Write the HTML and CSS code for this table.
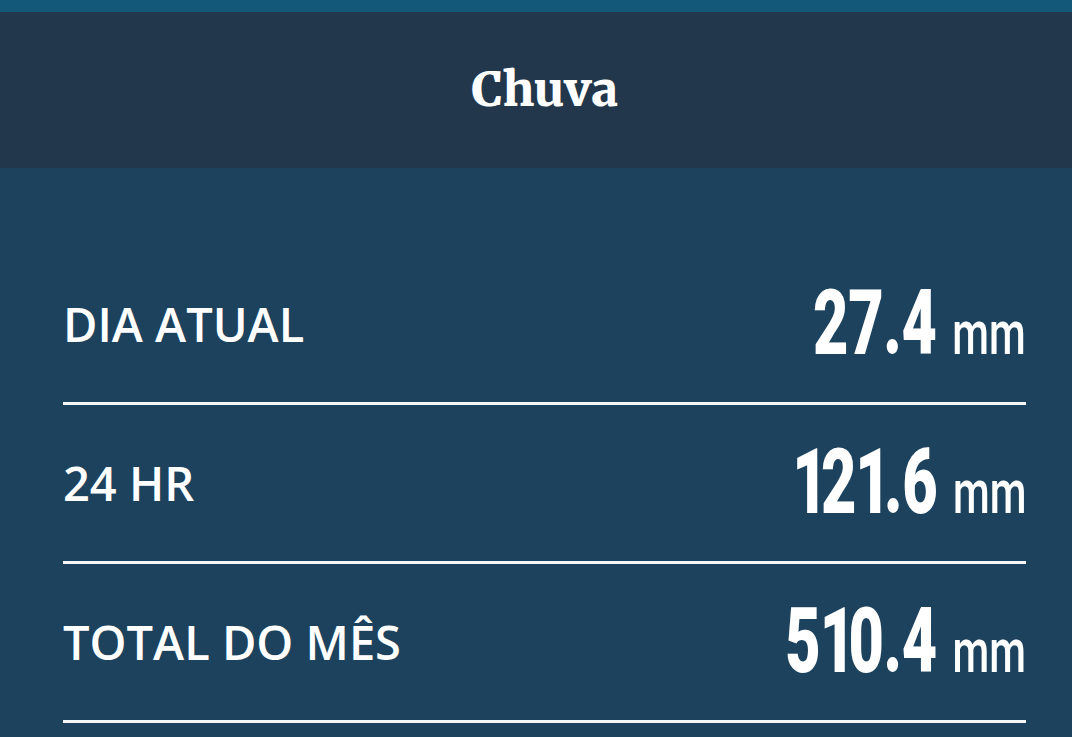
FILE: index.html
```html
<!DOCTYPE html>
<html lang="pt">
<head>
<meta charset="utf-8">
<title>Chuva</title>
<link rel="stylesheet" href="styles.css">
</head>
<body>
<div class="topstrip"></div>
<header class="head"><h1 class="title">Chuva</h1></header>
<main class="panel">
  <ul class="rows">
    <li class="row"><span class="label">DIA ATUAL</span><span class="value"><span class="num">27.4</span><span class="unit">mm</span></span></li>
    <li class="row"><span class="label">24 HR</span><span class="value"><span class="num"><span class="one">1</span>2<span class="one">1</span>.6</span><span class="unit">mm</span></span></li>
    <li class="row"><span class="label">TOTAL DO MÊS</span><span class="value"><span class="num">5<span class="one">1</span>0.4</span><span class="unit">mm</span></span></li>
  </ul>
</main>
</body>
</html>
```
FILE: styles.css
```css
html, body { margin: 0; padding: 0; }
body {
  width: 1072px;
  height: 737px;
  overflow: hidden;
  background: #1c425e;
  color: #ffffff;
  font-family: "Open Sans", "Liberation Sans", sans-serif;
}
.topstrip { height: 12px; background: #135878; }
.head {
  height: 156px;
  background: #22374b;
  display: flex;
  align-items: center;
  justify-content: center;
  padding-left: 18px;
  box-sizing: border-box;
}
.title {
  margin: 0;
  font-family: "Merriweather", "DejaVu Serif", serif;
  font-weight: 900;
  font-size: 47px;
  line-height: 1;
  padding-bottom: 2px;
}
.panel { padding: 78px 46px 0 63px; }
.rows { list-style: none; margin: 0; padding: 0; }
.row {
  height: 156px;
  border-bottom: 3px solid #f4f6f8;
  display: flex;
  align-items: center;
  justify-content: space-between;
}
.label {
  font-size: 47px;
  font-weight: 600;
  letter-spacing: 0;
}
.value {
  display: flex;
  align-items: baseline;
  transform: scaleX(0.68);
  transform-origin: right center;
}
.num {
  font-family: Roboto, "Liberation Sans", sans-serif;
  font-weight: 900;
  font-size: 90px;
  line-height: 1;
  letter-spacing: -0.5px;
}
.one { letter-spacing: -10px; margin-left: -1px; }
.unit {
  font-family: Roboto, "Liberation Sans", sans-serif;
  font-weight: 500;
  font-size: 62px;
  margin-left: 23px;
  line-height: 1;
}
```
